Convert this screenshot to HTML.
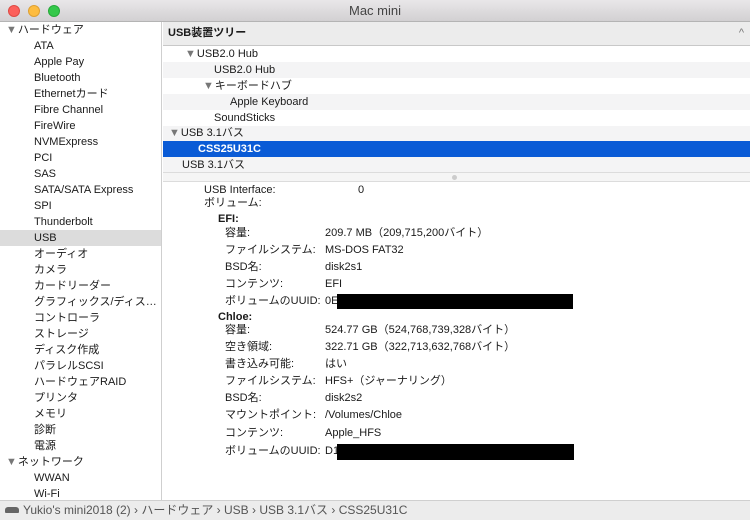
<!DOCTYPE html>
<html><head><meta charset="utf-8"><style>
*{margin:0;padding:0;box-sizing:border-box}
body{width:750px;height:520px;overflow:hidden;background:#fff;font-family:"Liberation Sans","Noto Sans CJK JP",sans-serif;font-size:11px;color:#1a1a1a;position:relative}
.title{position:absolute;left:0;top:0;width:750px;height:22px;background:linear-gradient(#e9e7e9,#d2d0d2);border-bottom:1px solid #b4b4b4;text-align:center;line-height:22px;font-size:13px;color:#444}
.dot{position:absolute;top:5px;width:12px;height:12px;border-radius:50%}
.side{position:absolute;left:0;top:22px;width:162px;height:478px;border-right:1px solid #cfcfcf;background:#fff}
.side div{height:16px;line-height:17px;padding-left:34px;white-space:nowrap}
.side div.h{padding-left:6px}
.side div.sel{background:#dcdcdc}
.tri{font-size:11px;color:#777;margin-right:1px}
.hdr{position:absolute;left:163px;top:22px;width:587px;height:24px;background:#ececec;border-bottom:1px solid #c8c8c8;line-height:23px;padding-left:5px;font-weight:bold;font-size:11px}
.tree{position:absolute;left:163px;top:46px;width:587px}
.tree div{height:16px;line-height:16px;white-space:nowrap}
.tree div.s{background:#f4f4f5}
.tree div.sel{background:#0a5bd6;color:#fff;font-weight:bold}
.split{position:absolute;left:163px;top:172px;width:587px;height:10px;background:#f5f5f5;border-top:1px solid #dcdcdc;border-bottom:1px solid #dcdcdc}
.r{position:absolute;white-space:nowrap;line-height:14px;height:14px}
.blk{position:absolute;background:#000}
.status{position:absolute;left:0;top:500px;width:750px;height:20px;background:#ececec;border-top:1px solid #cfcfcf;line-height:19px;padding-left:5px;font-size:12px;color:#555}
</style></head><body>
<div class="title">Mac mini
<span class="dot" style="left:8px;background:#fc605b;border:1px solid #de4a44"></span>
<span class="dot" style="left:28px;background:#fdbc40;border:1px solid #dea033"></span>
<span class="dot" style="left:48px;background:#34c84a;border:1px solid #27a93a"></span>
</div>
<div class="side">
<div class="h"><span class="tri">▼</span>ハードウェア</div>
<div>ATA</div><div>Apple Pay</div><div>Bluetooth</div><div>Ethernetカード</div><div>Fibre Channel</div><div>FireWire</div><div>NVMExpress</div><div>PCI</div><div>SAS</div><div>SATA/SATA Express</div><div>SPI</div><div>Thunderbolt</div><div class="sel">USB</div><div>オーディオ</div><div>カメラ</div><div>カードリーダー</div><div>グラフィックス/ディス…</div><div>コントローラ</div><div>ストレージ</div><div>ディスク作成</div><div>パラレルSCSI</div><div>ハードウェアRAID</div><div>プリンタ</div><div>メモリ</div><div>診断</div><div>電源</div>
<div class="h"><span class="tri">▼</span>ネットワーク</div>
<div>WWAN</div><div>Wi-Fi</div>
</div>
<div class="hdr">USB装置ツリー<span style="position:absolute;right:6px;top:0;font-weight:normal;color:#777">^</span></div>
<div class="tree">
<div style="padding-left:22px"><span class="tri">▼</span>USB2.0 Hub</div>
<div class="s" style="padding-left:51px">USB2.0 Hub</div>
<div style="padding-left:40px"><span class="tri">▼</span>キーボードハブ</div>
<div class="s" style="padding-left:67px">Apple Keyboard</div>
<div style="padding-left:51px">SoundSticks</div>
<div class="s" style="padding-left:6px;height:15px;line-height:15px"><span class="tri">▼</span>USB 3.1バス</div>
<div class="sel" style="padding-left:35px">CSS25U31C</div>
<div class="s" style="padding-left:19px">USB 3.1バス</div>
</div>
<div class="split"><span style="position:absolute;left:289px;top:2px;width:5px;height:5px;border-radius:50%;background:#ccc"></span></div>
<div class="r" style="left:204px;top:183px">USB Interface:</div><div class="r" style="left:358px;top:183px">0</div>
<div class="r" style="left:204px;top:196px">ボリューム:</div>
<div class="r" style="left:218px;top:212px;font-weight:bold">EFI:</div>
<div class="r" style="left:225px;top:226px">容量:</div><div class="r" style="left:325px;top:226px">209.7 MB（209,715,200バイト）</div>
<div class="r" style="left:225px;top:243px">ファイルシステム:</div><div class="r" style="left:325px;top:243px">MS-DOS FAT32</div>
<div class="r" style="left:225px;top:260px">BSD名:</div><div class="r" style="left:325px;top:260px">disk2s1</div>
<div class="r" style="left:225px;top:277px">コンテンツ:</div><div class="r" style="left:325px;top:277px">EFI</div>
<div class="r" style="left:225px;top:294px">ボリュームのUUID:</div><div class="r" style="left:325px;top:294px">0E</div>
<div class="blk" style="left:337px;top:294px;width:236px;height:15px"></div>
<div class="r" style="left:218px;top:310px;font-weight:bold">Chloe:</div>
<div class="r" style="left:225px;top:323px">容量:</div><div class="r" style="left:325px;top:323px">524.77 GB（524,768,739,328バイト）</div>
<div class="r" style="left:225px;top:340px">空き領域:</div><div class="r" style="left:325px;top:340px">322.71 GB（322,713,632,768バイト）</div>
<div class="r" style="left:225px;top:357px">書き込み可能:</div><div class="r" style="left:325px;top:357px">はい</div>
<div class="r" style="left:225px;top:374px">ファイルシステム:</div><div class="r" style="left:325px;top:374px">HFS+（ジャーナリング）</div>
<div class="r" style="left:225px;top:391px">BSD名:</div><div class="r" style="left:325px;top:391px">disk2s2</div>
<div class="r" style="left:225px;top:408px">マウントポイント:</div><div class="r" style="left:325px;top:408px">/Volumes/Chloe</div>
<div class="r" style="left:225px;top:426px">コンテンツ:</div><div class="r" style="left:325px;top:426px">Apple_HFS</div>
<div class="r" style="left:225px;top:444px">ボリュームのUUID:</div><div class="r" style="left:325px;top:444px">D1</div>
<div class="blk" style="left:337px;top:444px;width:237px;height:16px"></div>
<div class="status"><span style="display:inline-block;width:14px;height:6px;background:#666;border-radius:3px 3px 1px 1px;margin-right:4px;vertical-align:1px"></span>Yukio's mini2018 (2) › ハードウェア › USB › USB 3.1バス › CSS25U31C</div>
</body></html>
